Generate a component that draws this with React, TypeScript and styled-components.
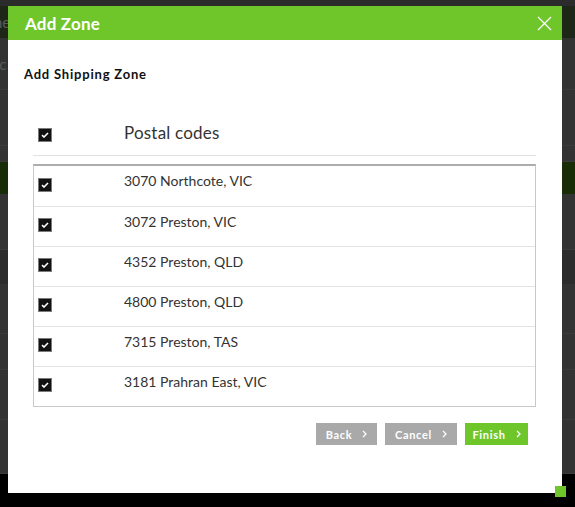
import styled, { createGlobalStyle } from 'styled-components';

const GlobalStyle = createGlobalStyle`
  html, body {
    margin: 0;
    padding: 0;
    background: #000000;
  }
  body {
    font-family: Lato, "Open Sans", sans-serif;
    width: 575px;
    height: 507px;
    overflow: hidden;
  }
`;

const zones = [
  '3070 Northcote, VIC',
  '3072 Preston, VIC',
  '4352 Preston, QLD',
  '4800 Preston, QLD',
  '7315 Preston, TAS',
  '3181 Prahran East, VIC',
];

type StripeKind = 'top' | 'bar' | 'green' | 'row' | 'dark';

const stripes: { kind: StripeKind; h: number; label?: string }[] = [
  { kind: 'top', h: 6 },
  { kind: 'bar', h: 32, label: 'he' },
  { kind: 'row', h: 52, label: 'rc' },
  { kind: 'row', h: 56 },
  { kind: 'row', h: 16 },
  { kind: 'green', h: 32 },
  { kind: 'row', h: 56 },
  { kind: 'dark', h: 34 },
  { kind: 'row', h: 50 },
  { kind: 'row', h: 36 },
  { kind: 'row', h: 50 },
  { kind: 'row', h: 54 },
];

const actions = [
  { label: 'Back', width: 61, primary: false },
  { label: 'Cancel', width: 72, primary: false },
  { label: 'Finish', width: 63, primary: true },
];

const Check = () => (
  <svg width="8" height="6" viewBox="0 0 8 6">
    <path d="M1 3.2 L3 5 L7 1" stroke="#ffffff" strokeWidth="1.6" fill="none" />
  </svg>
);

const Chevron = () => (
  <svg width="5" height="8" viewBox="0 0 5 8">
    <path d="M1 1 L4 4 L1 7" stroke="#ffffff" strokeWidth="1.3" fill="none" />
  </svg>
);

const App = () => {
  return (
    <>
      <GlobalStyle />
      <SPage>
        {stripes.map((s, i) => (
          <SStripe key={i} $kind={s.kind} style={{ height: s.h }}>
            {s.label && <SStripeText>{s.label}</SStripeText>}
          </SStripe>
        ))}
      </SPage>
      <SModal>
        <SHeader>
          <STitle>Add Zone</STitle>
          <SClose aria-label="close">
            <svg width="15" height="15" viewBox="0 0 15 15">
              <path d="M1 1 L14 14 M14 1 L1 14" stroke="#ffffff" strokeWidth="1.3" />
            </svg>
          </SClose>
        </SHeader>
        <SBody>
          <SSubTitle>Add Shipping Zone</SSubTitle>
          <SListHead>
            <SBoxCell>
              <SCheckbox>
                <Check />
              </SCheckbox>
            </SBoxCell>
            <SHeadLabel>Postal codes</SHeadLabel>
          </SListHead>
          <STable>
            {zones.map((z) => (
              <SRow key={z}>
                <SBoxCell>
                  <SCheckbox>
                    <Check />
                  </SCheckbox>
                </SBoxCell>
                <SRowLabel>{z}</SRowLabel>
              </SRow>
            ))}
          </STable>
          <SActions>
            {actions.map((a) => (
              <SButton key={a.label} $primary={a.primary} $width={a.width}>
                {a.label} <Chevron />
              </SButton>
            ))}
          </SActions>
        </SBody>
      </SModal>
      <SCorner />
    </>
  );
};
export default App;

const SPage = styled.div`
  width: 575px;
  display: flex;
  flex-direction: column;
`;

const SStripe = styled.div<{ $kind: StripeKind }>`
  display: flex;
  align-items: center;
  background: ${(p) =>
    p.$kind === 'top'
      ? '#2b2b2b'
      : p.$kind === 'bar'
      ? '#1d2617'
      : p.$kind === 'green'
      ? '#182c06'
      : p.$kind === 'dark'
      ? '#2c2c2c'
      : '#333333'};
  border-bottom: 1px solid ${(p) => (p.$kind === 'row' ? '#3b3b3b' : 'transparent')};
  box-sizing: border-box;
`;

const SStripeText = styled.span`
  color: #5a5a5a;
  font-size: 15px;
  margin-left: -6px;
`;

const SModal = styled.div`
  position: absolute;
  left: 8px;
  top: 6px;
  width: 554px;
  height: 487px;
  background: #ffffff;
  display: flex;
  flex-direction: column;
`;

const SHeader = styled.div`
  height: 34px;
  background: #6ec62b;
  display: flex;
  align-items: center;
  justify-content: space-between;
  padding: 0 10px 0 17px;
`;

const STitle = styled.div`
  color: #ffffff;
  font-weight: 700;
  font-size: 17px;
  letter-spacing: 0.2px;
`;

const SClose = styled.div`
  width: 15px;
  height: 15px;
  display: flex;
`;

const SBody = styled.div`
  display: flex;
  flex-direction: column;
  padding: 26px 26px 0 16px;
`;

const SSubTitle = styled.div`
  font-weight: 700;
  font-size: 13px;
  color: #111111;
  letter-spacing: 0.8px;
  line-height: 16px;
`;

const SListHead = styled.div`
  margin: 37px 0 0 9px;
  height: 36px;
  display: flex;
  align-items: flex-start;
  border-bottom: 1px solid #e2e2e2;
`;

const SBoxCell = styled.div`
  width: 91px;
  padding: 9px 0 0 5px;
  box-sizing: border-box;
  display: flex;
`;

const SCheckbox = styled.div`
  width: 14px;
  height: 14px;
  box-sizing: border-box;
  background: #111111;
  border: 1px solid #7a7a7a;
  display: flex;
  align-items: center;
  justify-content: center;
`;

const SHeadLabel = styled.div`
  font-size: 17px;
  color: #333333;
  padding-top: 3px;
  line-height: 22px;
  letter-spacing: 0.2px;
`;

const STable = styled.div`
  margin: 8px 0 0 9px;
  border: 1px solid #c8c8c8;
  border-top: 2px solid #adadad;
  display: flex;
  flex-direction: column;
`;

const SRow = styled.div`
  height: 40px;
  box-sizing: border-box;
  display: flex;
  align-items: flex-start;
  & + & {
    border-top: 1px solid #e2e2e2;
  }
  & ${SBoxCell} {
    width: 90px;
    padding: 12px 0 0 4px;
  }
  & + & ${SBoxCell} {
    padding-top: 11px;
  }
`;

const SRowLabel = styled.div`
  font-size: 14px;
  color: #333333;
  padding-top: 6px;
  line-height: 18px;
`;

const SActions = styled.div`
  display: flex;
  justify-content: flex-end;
  gap: 8px;
  margin-top: 16px;
  padding-right: 8px;
`;

const SButton = styled.div<{ $primary: boolean; $width: number }>`
  width: ${(p) => p.$width}px;
  height: 22px;
  box-sizing: border-box;
  display: flex;
  align-items: center;
  justify-content: center;
  gap: 10px;
  background: ${(p) => (p.$primary ? '#6ec62b' : '#a9a9a9')};
  color: #ffffff;
  font-weight: 700;
  font-size: 11px;
  letter-spacing: 0.7px;
`;

const SCorner = styled.div`
  position: absolute;
  left: 555px;
  top: 486px;
  width: 11px;
  height: 11px;
  background: #6ec62b;
`;
